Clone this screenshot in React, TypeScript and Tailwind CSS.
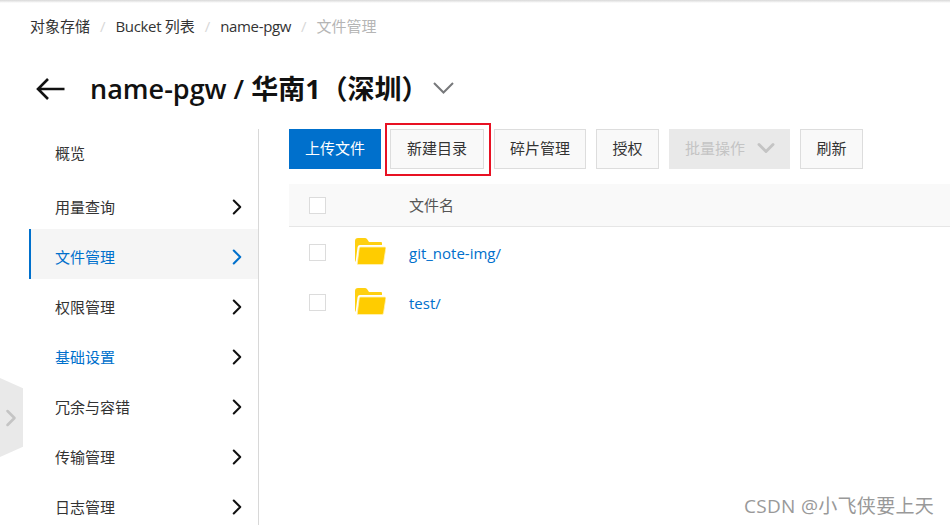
import { ChevronRight, ChevronDown } from "lucide-react";

const menu = [
  { label: "概览" },
  { label: "用量查询", arrow: true },
  { label: "文件管理", arrow: true, active: true },
  { label: "权限管理", arrow: true },
  { label: "基础设置", arrow: true, blue: true },
  { label: "冗余与容错", arrow: true },
  { label: "传输管理", arrow: true },
  { label: "日志管理", arrow: true },
];

function Folder() {
  return (
    <svg width="31" height="27" viewBox="0 0 31 27" className="shrink-0">
      <path d="M0 3 Q0 0 3 0 H10 Q11 0 12 1 L14 4 H26 Q27 4 27 5 V7 H5 Q3 7 2.6 9 L0.6 24 Q0 23 0 22 Z" fill="#ffd010" />
      <path d="M5.5 9 H30 Q31 9 30.8 10.5 L28.5 25 Q28.3 26.5 27 26.5 H3 Q2 26.5 2.3 25 L4.2 10.5 Q4.4 9 5.5 9 Z" fill="#ffcc00" stroke="#fff3b8" strokeWidth="0.8" />
    </svg>
  );
}

function Checkbox() {
  return <span className="block w-[17px] h-[17px] border border-[#dcdcdc] bg-white shrink-0"></span>;
}

function Btn({ children, w, red }: { children: React.ReactNode; w: string; red?: boolean }) {
  return (
    <div className={`relative h-10 pb-[2px] border border-[#dddddd] bg-[#f9f9f9] text-[#333333] flex items-center justify-center ${w}`}>
      {children}
      {red && <span className="absolute -left-[6px] -top-[7px] w-[106px] h-[53px] border-2 border-[#e81123]"></span>}
    </div>
  );
}

function FileRow({ name }: { name: string }) {
  return (
    <div className="h-[50px] flex items-center pl-5">
      <Checkbox />
      <div className="ml-[29px] w-[54px] -mt-[2px]">
        <Folder />
      </div>
      <a className="text-[#0070cc] pt-[2px]">{name}</a>
    </div>
  );
}

export default function App() {
  return (
    <div
      className="w-[950px] h-[525px] overflow-hidden relative bg-white text-[15px] text-[#333333]"
      style={{ fontFamily: '"Open Sans", "Noto Sans CJK SC", sans-serif' }}
    >
      <div className="h-[3px] bg-gradient-to-b from-[#d8d8d8] to-white"></div>

      <nav className="h-[48px] pb-[2px] pl-[30px] flex items-center">
        <span>对象存储</span>
        <span className="mx-[10px] text-[#d8d8d8]">/</span>
        <span>
          <span className="tracking-[-0.35px]">Bucket </span>列表
        </span>
        <span className="mx-[10px] text-[#d8d8d8]">/</span>
        <span className="tracking-[-0.35px]">name-pgw</span>
        <span className="mx-[10px] text-[#d8d8d8]">/</span>
        <span className="text-[#b5b5b5]">文件管理</span>
      </nav>

      <header className="h-[78px] pl-[36px] flex items-center text-[#111111] -mt-[1px]">
        <svg width="29" height="22" viewBox="0 0 29 22" fill="none" stroke="#111111" strokeWidth="2.6" className="shrink-0">
          <path d="M2 11 H28.5 M12 1 L2 11 L12 21" />
        </svg>
        <h1 className="ml-[25px] w-[343px] shrink-0 text-[27px] font-semibold leading-none -mt-[2px]">
          name-pgw / <span className="font-bold">华南1（深圳）</span>
        </h1>
        <svg width="21" height="12" viewBox="0 0 21 12" fill="none" stroke="#77797b" strokeWidth="2" className="shrink-0 -mt-[3px]">
          <path d="M1 1 L10.5 10.5 L20 1" />
        </svg>
      </header>

      <div className="flex mt-[1px]">
        <aside className="ml-[29px] w-[230px] h-[400px] border-r border-[#d8d8d8] shrink-0">
          {menu.map((m) => (
            <div
              key={m.label}
              className={`h-[50px] pl-[24px] pr-[8px] flex items-center justify-between border-l-2 ${
                m.arrow ? "pt-[5px]" : "pb-[2px]"
              } ${m.active ? "bg-[#f5f5f5] border-[#0070cc]" : "border-transparent"} ${
                m.active || m.blue ? "text-[#0070cc]" : "text-[#333333]"
              }`}
            >
              <span className={m.arrow ? "pt-[1px]" : ""}>{m.label}</span>
              {m.arrow && (
                <ChevronRight size={26} strokeWidth={1.9} className={m.active ? "text-[#0070cc]" : "text-[#111111]"} />
              )}
            </div>
          ))}
        </aside>

        <main className="ml-[30px] flex-1">
          <div className="flex gap-[10px]">
            <div className="h-10 pb-[2px] w-[92px] bg-[#0070cc] text-white flex items-center justify-center">上传文件</div>
            <div className="flex gap-[10px] -ml-[1px]">
              <Btn w="w-[94px]" red>新建目录</Btn>
              <Btn w="w-[92px]">碎片管理</Btn>
              <Btn w="w-[63px]">授权</Btn>
              <div className="h-10 pb-[2px] w-[121px] bg-[#e9e9e9] text-[#c4c4c4] flex items-center pl-[16px]">
                批量操作
                <ChevronDown size={28} strokeWidth={2.5} className="ml-[7px] text-[#c4c4c4] shrink-0" />
              </div>
              <Btn w="w-[63px]">刷新</Btn>
            </div>
          </div>

          <div className="mt-[15px] h-[43px] bg-[#f9f9f9] border-b border-[#e6e6e6] flex items-center pl-5 text-[#555555]">
            <Checkbox />
            <span className="ml-[83px]">文件名</span>
          </div>
          <FileRow name="git_note-img/" />
          <FileRow name="test/" />
        </main>
      </div>

      {/* side tab on the left edge */}
      <div className="absolute left-0 top-[378px] w-[23px] h-[79px] bg-[#e9e9e9] [clip-path:polygon(0_0,100%_13%,100%_87%,0_100%)] flex items-center justify-start">
        <ChevronRight size={28} strokeWidth={2.2} className="-ml-[3px] shrink-0 text-[#c4c4c4]" />
      </div>

      {/* image watermark */}
      <div className="absolute left-[744px] top-[494px] text-[19px] tracking-[0.3px] leading-6 text-[#999999]">CSDN @小飞侠要上天</div>
    </div>
  );
}
